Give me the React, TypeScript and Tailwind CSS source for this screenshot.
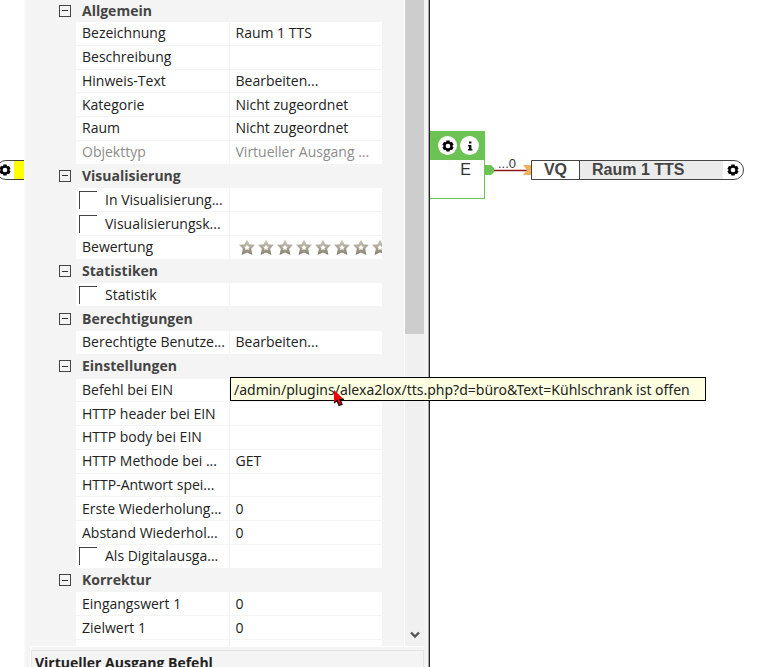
import { Fragment, useId } from "react";

type Row =
  | { kind: "group"; label: string }
  | { kind: "text"; label: string; value: string }
  | { kind: "readonly"; label: string; value: string }
  | { kind: "select"; label: string; value: string }
  | { kind: "action"; label: string; value: string }
  | { kind: "check"; label: string }
  | { kind: "rating"; label: string };

const rows: Row[] = [
  { kind: "group", label: "Allgemein" },
  { kind: "text", label: "Bezeichnung", value: "Raum 1 TTS" },
  { kind: "text", label: "Beschreibung", value: "" },
  { kind: "action", label: "Hinweis-Text", value: "Bearbeiten..." },
  { kind: "select", label: "Kategorie", value: "Nicht zugeordnet" },
  { kind: "select", label: "Raum", value: "Nicht zugeordnet" },
  { kind: "readonly", label: "Objekttyp", value: "Virtueller Ausgang ..." },
  { kind: "group", label: "Visualisierung" },
  { kind: "check", label: "In Visualisierung..." },
  { kind: "check", label: "Visualisierungsk..." },
  { kind: "rating", label: "Bewertung" },
  { kind: "group", label: "Statistiken" },
  { kind: "check", label: "Statistik" },
  { kind: "group", label: "Berechtigungen" },
  { kind: "action", label: "Berechtigte Benutze...", value: "Bearbeiten..." },
  { kind: "group", label: "Einstellungen" },
  { kind: "text", label: "Befehl bei EIN", value: "" },
  { kind: "text", label: "HTTP header bei EIN", value: "" },
  { kind: "text", label: "HTTP body bei EIN", value: "" },
  { kind: "select", label: "HTTP Methode bei ...", value: "GET" },
  { kind: "text", label: "HTTP-Antwort spei...", value: "" },
  { kind: "text", label: "Erste Wiederholung...", value: "0" },
  { kind: "text", label: "Abstand Wiederhol...", value: "0" },
  { kind: "check", label: "Als Digitalausga..." },
  { kind: "group", label: "Korrektur" },
  { kind: "text", label: "Eingangswert 1", value: "0" },
  { kind: "text", label: "Zielwert 1", value: "0" },
];

function Gear({ className }: { className: string }) {
  return (
    <svg viewBox="0 0 12 12" className={className} aria-hidden="true">
      <g fill="#000">
        <rect x="4.3" y="0.5" width="3.4" height="11" />
        <rect x="4.3" y="0.5" width="3.4" height="11" transform="rotate(60 6 6)" />
        <rect x="4.3" y="0.5" width="3.4" height="11" transform="rotate(120 6 6)" />
        <circle cx="6" cy="6" r="4.6" />
      </g>
      <circle cx="6" cy="6" r="2.3" fill="#fff" />
    </svg>
  );
}

function Stars() {
  return (
    <div className="flex items-center overflow-hidden pl-2">
      {Array.from({ length: 10 }, (_, i) => (
        <button key={i} type="button" aria-label={`${i + 1} Sterne`} className="w-[19px] shrink-0">
          <svg viewBox="0 0 18 18" className="size-[18px]">
            <defs>
              <linearGradient id={`star${i}`} x1="0" y1="0" x2="0" y2="1">
                <stop offset="0" stopColor="#cfccc0" />
                <stop offset="1" stopColor="#857e6c" />
              </linearGradient>
            </defs>
            <path
              d="M9 1.5 11.4 6.3 17 6.8 13.2 10.8 14.4 17 9 14.4 3.6 17 4.8 10.8 1 6.8 6.6 6.3Z"
              fill={`url(#star${i})`}
            />
            <path
              d="M9 6.6 9.9 8.5 12 8.8 10.5 10.2 10.9 12.1 9 11.2 7.1 12.1 7.5 10.2 6 8.8 8.1 8.5Z"
              fill="#fff"
            />
          </svg>
        </button>
      ))}
    </div>
  );
}

function GroupHeader({ label }: { label: string }) {
  return (
    <div className="flex min-h-0 items-center pb-px pl-[33px]">
      <button
        type="button"
        aria-label={`${label} einklappen`}
        className="flex size-3 items-center justify-center border border-[#444]"
      >
        <span className="h-px w-1.5 bg-[#333]" />
      </button>
      <h2 className="ml-[11px] font-bold text-[#444]">{label}</h2>
    </div>
  );
}

function PropertyRow({ row }: { row: Exclude<Row, { kind: "group" }> }) {
  const id = useId();
  const field = "w-full min-w-0 appearance-none bg-transparent px-1.5 outline-none";
  const tone = row.kind === "readonly" ? "text-[#8c8c8c]" : "text-[#222]";
  return (
    <div className={`ml-[50px] mr-[22px] grid min-h-0 grid-cols-2 gap-px border-b border-[#f4f4f4] ${tone}`}>
      <div className="flex min-w-0 items-center bg-white">
        {row.kind === "check" && (
          <input
            id={id}
            type="checkbox"
            className="ml-[3px] size-[18px] shrink-0 appearance-none border-l border-t border-[#444]"
          />
        )}
        <label
          htmlFor={row.kind === "rating" ? undefined : id}
          className={`whitespace-nowrap ${row.kind === "check" ? "pl-2" : "pl-1.5"}`}
        >
          {row.label}
        </label>
      </div>
      <div className="flex min-w-0 items-center overflow-hidden bg-white">
        {(row.kind === "text" || row.kind === "readonly") && (
          <input id={id} type="text" defaultValue={row.value} readOnly={row.kind === "readonly"} className={field} />
        )}
        {row.kind === "select" && (
          <select id={id} className={field}>
            <option>{row.value}</option>
          </select>
        )}
        {row.kind === "action" && (
          <button id={id} type="button" className={`${field} text-left`}>
            {row.value}
          </button>
        )}
        {row.kind === "rating" && <Stars />}
      </div>
    </div>
  );
}

function PropertyPanel() {
  return (
    <aside className="flex w-[406px] shrink-0 flex-col border-l-2 border-r border-l-[#f9f9f9] border-r-[#222] bg-[#f4f4f4] shadow-[inset_-1px_0_0_#aaa]">
      <div className="flex min-h-0 flex-1">
        <div className="grid flex-1 grid-rows-[22px_repeat(26,minmax(0,1fr))_6px]">
          {rows.map((row, i) => (
            <Fragment key={i}>
              {row.kind === "group" ? <GroupHeader label={row.label} /> : <PropertyRow row={row} />}
            </Fragment>
          ))}
          <div className="ml-[50px] mr-[22px] grid grid-cols-2 gap-px">
            <div className="bg-white" />
            <div className="bg-white" />
          </div>
        </div>
        <div className="mr-[5px] flex w-5 flex-col border-l border-white bg-[#f0f0f0]">
          <div className="h-[334px] bg-[#cdcdcd]" />
          <button type="button" aria-label="Nach unten" className="mb-[7px] mt-auto flex justify-center">
            <svg viewBox="0 0 10 8" className="h-2 w-2.5">
              <path d="M1 1.5 5 5.5 9 1.5" fill="none" stroke="#555" strokeWidth="2.4" />
            </svg>
          </button>
        </div>
      </div>
      <div className="ml-1 mr-[5px] h-[21px] overflow-hidden border-l border-t border-white">
        <div className="mt-[3px] border-l border-r border-t border-[#e4e4e4] pl-[3px] font-bold leading-6 text-[#222]">
          Virtueller Ausgang Befehl
        </div>
      </div>
    </aside>
  );
}

function Canvas() {
  return (
    <main className="relative flex-1 overflow-hidden bg-white font-['Liberation_Sans',Arial,sans-serif] text-base text-[#333]">
      <section className="absolute left-0 top-[131px] w-[55px] border-b border-r border-b-[#6ac352] border-r-[#6ac352]">
        <div className="flex h-[29px] items-center gap-[3px] bg-[#6ac352] pl-2">
          <button type="button" aria-label="Einstellungen" className="flex size-[19px] shrink-0 items-center justify-center rounded-full bg-white">
            <Gear className="size-3" />
          </button>
          <button type="button" aria-label="Info" className="flex size-[19px] shrink-0 items-center justify-center rounded-full bg-white">
            <svg viewBox="0 0 6 10" className="h-2.5 w-1.5">
              <path d="M2 0.5h2.4v2H2zM1 4h3.4v4H5.4v1.5H1V8h1V5.5H1z" fill="#111" />
            </svg>
          </button>
        </div>
        <p className="h-[38px] pr-[13px] text-right leading-5">E</p>
      </section>
      <svg viewBox="0 0 48 12" className="absolute left-[54px] top-[164px] h-3 w-12" aria-hidden="true">
        <path d="M0 1h7l3 3v4l-3 3H0z" fill="#6ac352" />
        <path d="M10 6.5h33" stroke="#8b1a1a" strokeWidth="1.4" />
        <path d="M39 1h9v10h-9l4-5z" fill="#f4ae5c" />
      </svg>
      <span className="absolute left-[68px] top-[157px] text-[13px] leading-[14px]">...0</span>
      <section className="absolute left-[101px] top-40 flex h-5 w-[213px] rounded-r-full border border-[#444] bg-white font-bold text-[#444]">
        <span className="w-12 border-r border-[#444] text-center leading-[18px]">VQ</span>
        <span className="flex-1 bg-[#ebebeb] pl-3 leading-[18px]">Raum 1 TTS</span>
        <button type="button" aria-label="Einstellungen" className="flex w-5 items-center justify-center">
          <Gear className="size-3" />
        </button>
      </section>
    </main>
  );
}

export default function App() {
  return (
    <div className="relative flex h-screen overflow-hidden bg-white font-['Open_Sans','Noto_Sans',sans-serif] text-sm leading-5">
      <div className="relative w-6 shrink-0 overflow-hidden">
        <div className="absolute -left-1 top-40 flex h-5 w-10 rounded-l-full border border-[#444] bg-white">
          <button type="button" aria-label="Einstellungen" className="flex w-[17px] items-center justify-center pr-px">
            <Gear className="size-3 shrink-0" />
          </button>
          <div className="flex-1 bg-[#ffff00]" />
        </div>
      </div>
      <PropertyPanel />
      <Canvas />
      <div
        role="tooltip"
        className="absolute left-[230px] top-[377px] h-6 w-[476px] whitespace-nowrap border border-black bg-[#ffffe1] px-[3px] font-['Noto_Sans',sans-serif] leading-6 text-[#222]"
      >
        /admin/plugins/alexa2lox/tts.php?d=büro&amp;Text=Kühlschrank ist offen
      </div>
      <svg viewBox="0 0 12 18" className="absolute left-[333px] top-[389px] h-[18px] w-3" aria-hidden="true">
        <path d="M1 1v13l3-2.5L6 16l3-1-2-4.5h4z" fill="#f00000" />
        <path d="M1 14l3-2.5L6 16.5l3-1.2-2-4.8h4" fill="none" stroke="#111" strokeWidth="1.3" />
      </svg>
    </div>
  );
}
